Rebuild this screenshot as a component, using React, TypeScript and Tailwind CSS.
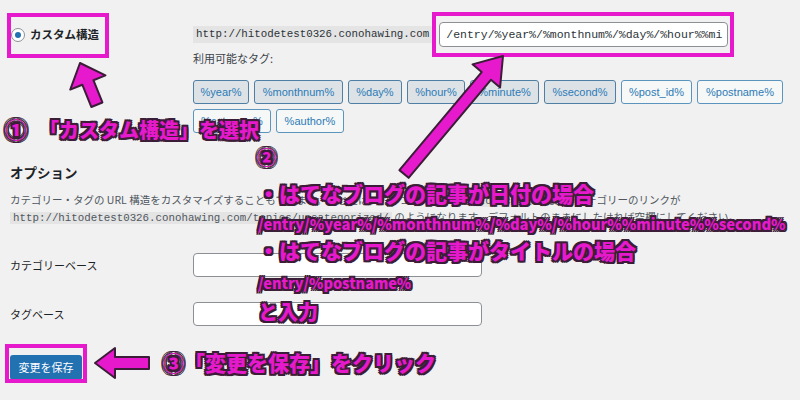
import React from "react";

const annot =
  "absolute whitespace-nowrap font-black leading-none text-[#e619cc] [text-shadow:2px_0_#3b1d37,-2px_0_#3b1d37,0_2px_#3b1d37,0_-2px_#3b1d37,2px_2px_#3b1d37,-2px_-2px_#3b1d37,2px_-2px_#3b1d37,-2px_2px_#3b1d37]";

const tagsRow1 = [
  { label: "%year%", w: "w-[56px]", active: true },
  { label: "%monthnum%", w: "w-[89px]", active: true },
  { label: "%day%", w: "w-[54px]", active: true },
  { label: "%hour%", w: "w-[58px]", active: true },
  { label: "%minute%", w: "w-[69px]", active: true },
  { label: "%second%", w: "w-[72px]", active: true },
  { label: "%post_id%", w: "w-[71px]", active: false },
  { label: "%postname%", w: "w-[86px]", active: false },
];

const tagsRow2 = [
  { label: "%category%", w: "w-[78px]", active: false },
  { label: "%author%", w: "w-[68px]", active: false },
];

const TagButton = ({ label, w, active }: { label: string; w: string; active: boolean }) => (
  <button
    className={`${w} h-[24px] rounded-[3px] border text-[11px] text-[#2c7bb6] font-['Liberation_Sans',sans-serif] ${
      active ? "bg-[#dde2e6] border-[#4f7fa3]" : "bg-[#f6f7f7] border-[#5b94bd]"
    }`}
  >
    {label}
  </button>
);

export default function App() {
  return (
    <div className="relative w-[800px] h-[400px] overflow-hidden bg-[#f1f1f1] text-[#1d2327] font-['Noto_Sans_CJK_JP',sans-serif]">
      {/* permalink structure */}
      <div className="flex pt-[22px] pl-[11px]">
        <div className="w-[182px] h-[25px] flex items-center">
          <span className="w-[14px] h-[14px] rounded-full border border-[#8c8f94] bg-white flex items-center justify-center">
            <span className="w-[6px] h-[6px] rounded-full bg-[#2271b1]" />
          </span>
          <span className="ml-[5px] text-[11.5px] font-bold">カスタム構造</span>
        </div>
        <div className="flex flex-col">
          <div className="flex items-center h-[25px]">
            <code className="h-[17px] px-[3px] bg-[#e4e4e4] leading-[17px] text-[10.8px] text-[#2c3338] font-['Liberation_Mono',monospace]">
              http://hitodetest0326.conohawing.com
            </code>
            <div className="ml-[7px] w-[289px] h-[25px] bg-white border border-[#8c8f94] rounded-[4px] px-[6px] flex items-center text-[11.5px] text-[#2c3338] font-['Liberation_Mono',monospace] overflow-hidden whitespace-nowrap">
              /entry/%year%/%monthnum%/%day%/%hour%%mi
            </div>
          </div>
          <div className="mt-[4px] h-[14px] leading-[14px] text-[11px] text-[#3c434a]">利用可能なタグ:</div>
          <div className="mt-[15px] flex gap-[5px]">
            {tagsRow1.map((t) => (
              <TagButton key={t.label} {...t} />
            ))}
          </div>
          <div className="mt-[5px] flex gap-[5px]">
            {tagsRow2.map((t) => (
              <TagButton key={t.label} {...t} />
            ))}
          </div>
        </div>
      </div>

      {/* options */}
      <div className="pl-[10px]">
        <h2 className="mt-[30px] h-[18px] leading-[18px] text-[13.5px] font-bold">オプション</h2>
        <p className="mt-[11px] text-[10.5px] leading-[15px] text-[#50575e] whitespace-nowrap">
          カテゴリー・タグの URL 構造をカスタマイズすることもできます。たとえば、カテゴリーベースに{" "}
          <code className="bg-[#e4e4e4] px-[3px] text-[10.8px] font-['Liberation_Mono',monospace]">topics</code>{" "}
          を使えば、カテゴリーのリンクが
          <br />
          <code className="bg-[#e4e4e4] px-[3px] text-[10.8px] font-['Liberation_Mono',monospace]">
            http://hitodetest0326.conohawing.com/topics/uncategorized/
          </code>{" "}
          のようになります。デフォルトのままにしたければ空欄にしてください。
        </p>

        <div className="mt-[27px] flex items-center">
          <label className="w-[183px] text-[11px]">カテゴリーベース</label>
          <div className="w-[289px] h-[24px] bg-white border border-[#8c8f94] rounded-[4px]" />
        </div>
        <div className="mt-[25px] flex items-center">
          <label className="w-[183px] text-[11px]">タグベース</label>
          <div className="w-[289px] h-[24px] bg-white border border-[#8c8f94] rounded-[4px]" />
        </div>

        <button className="mt-[29px] w-[72px] h-[25px] rounded-[3px] bg-[#2271b1] text-white text-[11px]">
          変更を保存
        </button>
      </div>

      {/* annotation boxes */}
      <div className="absolute left-[7px] top-[13px] w-[102px] h-[45px] border-[4px] border-[#e619cc]" />
      <div className="absolute left-[432px] top-[12px] w-[302px] h-[45px] border-[4px] border-[#e619cc]" />
      <div className="absolute left-[5px] top-[344px] w-[82px] h-[39px] border-[4px] border-[#e619cc]" />

      {/* arrows */}
      <svg className="absolute left-0 top-0" width="800" height="400" viewBox="0 0 800 400">
        <g fill="#e619cc" stroke="#3b1d37" strokeWidth="2" strokeLinejoin="round">
          <polygon
            transform="translate(80 63) rotate(-22)"
            points="0,0 19,21 6,21 6,45 -6,45 -6,21 -19,21"
          />
          <polygon
            transform="translate(503 56) rotate(40)"
            points="0,0 18,26 6,26 6,154 -6,154 -6,26 -18,26"
          />
          <polygon points="95,363 115,348 115,357 149,357 149,369 115,369 115,378" />
        </g>
      </svg>

      {/* annotation texts */}
      <div className={`${annot} left-[5px] top-[117px] text-[20px]`}>
        <span className="text-[22px]">①</span>
        <span className="ml-[12px]">「カスタム構造」を選択</span>
      </div>
      <div className={`${annot} left-[257px] top-[147px] text-[19px]`}>②</div>
      <div className={`${annot} left-[258px] top-[183px] text-[21px]`}>・はてなブログの記事が日付の場合</div>
      <div className={`${annot} left-[258px] top-[217px] text-[14.7px]`}>
        /entry/%year%/%monthnum%/%day%/%hour%%minute%%second%
      </div>
      <div className={`${annot} left-[258px] top-[240px] text-[21px]`}>・はてなブログの記事がタイトルの場合</div>
      <div className={`${annot} left-[258px] top-[276px] text-[14.5px]`}>/entry/%postname%</div>
      <div className={`${annot} left-[258px] top-[302px] text-[20px]`}>と入力</div>
      <div className={`${annot} left-[163px] top-[352px] text-[21px]`}>③「変更を保存」をクリック</div>
    </div>
  );
}
